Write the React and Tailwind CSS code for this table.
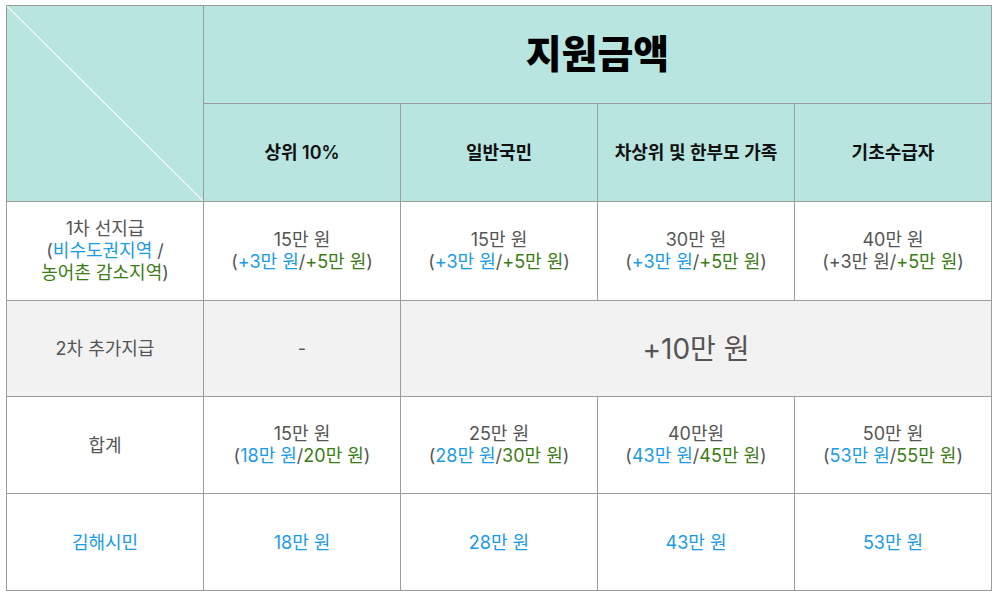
import React from 'react';

const BLUE = 'text-[#1a9be6]';
const GREEN = 'text-[#3a7c14]';

/* ─────────── CELL ─────────── */
function Cell({ className = '', children }) {
  return (
    <div className={`border-r border-b border-[#9c9c9c] flex flex-col items-center justify-center text-center ${className}`}>
      {children}
    </div>
  );
}

function Amount({ main, a, b, aColor = BLUE, bColor = GREEN }) {
  return (
    <Cell className="text-[18px] leading-[22px] text-[#555]">
      <span>{main}</span>
      <span>
        (<span className={aColor}>{a}</span>/<span className={bColor}>{b}</span>)
      </span>
    </Cell>
  );
}

export default function App() {
  return (
    <div className="w-[1000px] h-[597px] bg-white" style={{ fontFamily: 'Inter, "Noto Sans CJK KR", sans-serif' }}>
      <div className="ml-[6px] pt-[5px]">
        <div className="grid grid-cols-[197px_197px_197px_197px_197px] grid-rows-[98px_98px_99px_96px_97px_97px] border-l border-t border-[#9c9c9c] w-[986px]">
          {/* header */}
          <div className="relative row-span-2 border-r border-b border-[#9c9c9c] bg-[#b8e5e0]">
            <svg className="absolute inset-0 w-full h-full" preserveAspectRatio="none" viewBox="0 0 100 100">
              <line x1="0" y1="0" x2="100" y2="100" stroke="#ffffff" strokeWidth="1" vectorEffect="non-scaling-stroke" />
            </svg>
          </div>
          <Cell className="col-span-4 bg-[#b8e5e0] text-[39px] font-black text-black">지원금액</Cell>
          {['상위 10%', '일반국민', '차상위 및 한부모 가족', '기초수급자'].map((t) => (
            <Cell key={t} className="bg-[#b8e5e0] text-[18px] font-semibold text-[#111]">{t}</Cell>
          ))}

          {/* 1차 선지급 */}
          <Cell className="text-[18px] leading-[22px] text-[#555]">
            <span>1차 선지급</span>
            <span>(<span className={BLUE}>비수도권지역</span> /</span>
            <span><span className={GREEN}>농어촌 감소지역</span>)</span>
          </Cell>
          <Amount main="15만 원" a="+3만 원" b="+5만 원" />
          <Amount main="15만 원" a="+3만 원" b="+5만 원" />
          <Amount main="30만 원" a="+3만 원" b="+5만 원" />
          <Amount main="40만 원" a="+3만 원" b="+5만 원" aColor="text-[#555]" />

          {/* 2차 추가지급 */}
          <Cell className="bg-[#f2f2f2] text-[18px] text-[#555]">2차 추가지급</Cell>
          <Cell className="bg-[#f2f2f2] text-[18px] text-[#555]">-</Cell>
          <Cell className="col-span-3 bg-[#f2f2f2] text-[28px] text-[#555]">+10만 원</Cell>

          {/* 합계 */}
          <Cell className="text-[18px] text-[#555]">합계</Cell>
          <Amount main="15만 원" a="18만 원" b="20만 원" />
          <Amount main="25만 원" a="28만 원" b="30만 원" />
          <Amount main="40만원" a="43만 원" b="45만 원" />
          <Amount main="50만 원" a="53만 원" b="55만 원" />

          {/* 김해시민 */}
          {['김해시민', '18만 원', '28만 원', '43만 원', '53만 원'].map((t) => (
            <Cell key={t} className={`text-[18px] ${BLUE}`}>{t}</Cell>
          ))}
        </div>
      </div>
    </div>
  );
}
